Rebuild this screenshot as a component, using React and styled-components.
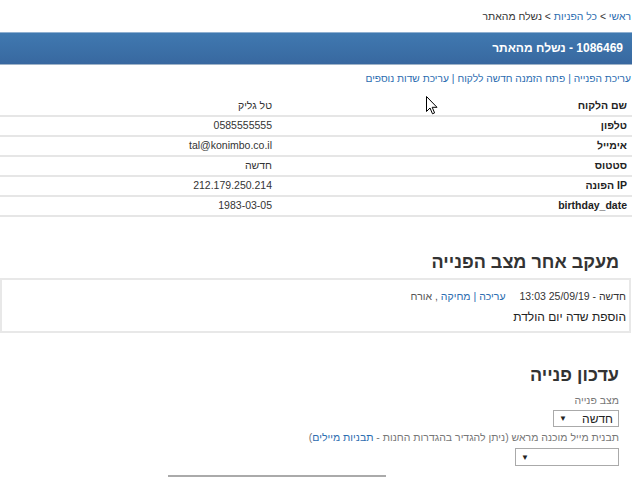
import React from "react";
import styled, { createGlobalStyle } from "styled-components";

const Global = createGlobalStyle`
  *, *::before, *::after { box-sizing: border-box; }
  html, body { margin: 0; padding: 0; background: #fff; }
  body {
    direction: rtl;
    font-family: "Liberation Sans", Arial, sans-serif;
    color: #333;
    font-size: 10.5px;
    overflow: hidden;
  }
  a { text-decoration: none; color: #2b6cb0; }
`;

const Page = styled.div`
  position: relative;
  width: 632px;
  margin-right: 7px;
  height: 477px;
  overflow: hidden;
`;

const Crumbs = styled.div`
  height: 32px;
  padding: 10px 1px 0 0;
  line-height: 14px;
  font-size: 10.4px;
  color: #333;
`;

const TitleBar = styled.div`
  height: 33px;
  border-top: 1px solid #8fb0d1;
  border-bottom: 1px solid #9fb3c8;
  background: linear-gradient(#4079b0, #3868a0);
  color: #fff;
  font-weight: bold;
  font-size: 12px;
  line-height: 31px;
  padding-right: 9px;
`;

const Actions = styled.div`
  margin-top: 7px;
  line-height: 14px;
  padding-right: 1px;
  font-size: 10.2px;
  color: #2b6cb0;
`;

const Sep = styled.span`
  margin: 0 3px;
`;

const Details = styled.div`
  margin-top: 11px;
  display: grid;
  grid-template-columns: 355px 1fr;
`;

const Cell = styled.div`
  height: 20px;
  padding: 1px 5px 0;
  line-height: 14px;
  border-bottom: 2px solid #e6e6e6;
  font-size: 10.5px;
  font-weight: ${(p) => (p.$label ? "bold" : "normal")};
  color: ${(p) => (p.$label ? "#222" : "#333")};
`;

const Heading = styled.h2`
  margin: ${(p) => p.$top}px 0 0;
  padding-right: 13px;
  font-size: 18px;
  font-weight: bold;
  color: #333;
  line-height: 20px;
`;

const LogBox = styled.div`
  margin: 6px 1px 0 0;
  height: 55px;
  border: 2px solid #e8e8e8;
  padding: 9px 3px 0 0;
`;

const LogMeta = styled.div`
  display: flex;
  gap: 14px;
  line-height: 14px;
  font-size: 10.5px;
  color: #333;
`;

const Muted = styled.span`
  color: #555;
`;

const LogNote = styled.div`
  margin-top: 7px;
  font-size: 12px;
  line-height: 14px;
  color: #222;
`;

const FieldLabel = styled.div`
  margin-top: ${(p) => p.$top}px;
  padding-right: 13px;
  font-size: 10.5px;
  line-height: 13px;
  color: #777;
`;

const Select = styled.div`
  margin: ${(p) => p.$top}px 13px 0 0;
  width: ${(p) => p.$w}px;
  height: ${(p) => p.$h}px;
  border: 1px solid #aaa;
  display: flex;
  align-items: center;
  justify-content: space-between;
  padding: 0 5px;
  font-size: 12px;
  color: #222;
  background: #fff;
`;

const Arrow = styled.span`
  font-size: 8px;
  color: #222;
`;

const Textarea = styled.div`
  margin: 9px 246px 0 0;
  width: 218px;
  height: 10px;
  border-top: 2px solid #aaa;
`;

const Pointer = styled.svg`
  position: absolute;
  left: 426px;
  top: 96px;
`;

const rows = [
  ["שם הלקוח", "טל גליק"],
  ["טלפון", "0585555555"],
  ["אימייל", "tal@konimbo.co.il"],
  ["סטטוס", "חדשה"],
  ["IP הפונה", "212.179.250.214"],
  ["birthday_date", "1983-03-05"],
];

export default function App() {
  return (
    <Page>
      <Global />
      <Crumbs>
        <a href="#">ראשי</a> &gt; <a href="#">כל הפניות</a> &gt; נשלח מהאתר
      </Crumbs>
      <TitleBar>1086469 - נשלח מהאתר</TitleBar>
      <Actions>
        <a href="#">עריכת הפנייה</a>
        <Sep>|</Sep>
        <a href="#">פתח הזמנה חדשה ללקוח</a>
        <Sep>|</Sep>
        <a href="#">עריכת שדות נוספים</a>
      </Actions>
      <Details>
        {rows.map(([k, v]) => (
          <React.Fragment key={k}>
            <Cell $label>{k}</Cell>
            <Cell>{v}</Cell>
          </React.Fragment>
        ))}
      </Details>

      <Heading $top={35}>מעקב אחר מצב הפנייה</Heading>
      <LogBox>
        <LogMeta>
          <span>חדשה - 25/09/19 13:03</span>
          <span>
            <a href="#">עריכה</a> <a href="#">|</a> <a href="#">מחיקה</a>{" "}
            <Muted>, אורח</Muted>
          </span>
        </LogMeta>
        <LogNote>הוספת שדה יום הולדת</LogNote>
      </LogBox>

      <Heading $top={32}>עדכון פנייה</Heading>
      <FieldLabel $top={9}>מצב פנייה</FieldLabel>
      <Select $top={3} $w={66} $h={17}>
        <span>חדשה</span>
        <Arrow>▼</Arrow>
      </Select>
      <FieldLabel $top={4}>
        תבנית מייל מוכנה מראש (ניתן להגדיר בהגדרות החנות -{" "}
        <a href="#">תבניות מיילים</a>)
      </FieldLabel>
      <Select $top={4} $w={104} $h={18}>
        <span />
        <Arrow>▼</Arrow>
      </Select>
      <Textarea />
      <Pointer width="12" height="19" viewBox="0 0 12 19">
        <path
          d="M0.5 0.5 L0.5 15.5 L4 12 L6.5 17.8 L8.6 16.9 L6.2 11.3 L11 11.3 Z"
          fill="#fff"
          stroke="#000"
          strokeWidth="1"
        />
      </Pointer>
    </Page>
  );
}
